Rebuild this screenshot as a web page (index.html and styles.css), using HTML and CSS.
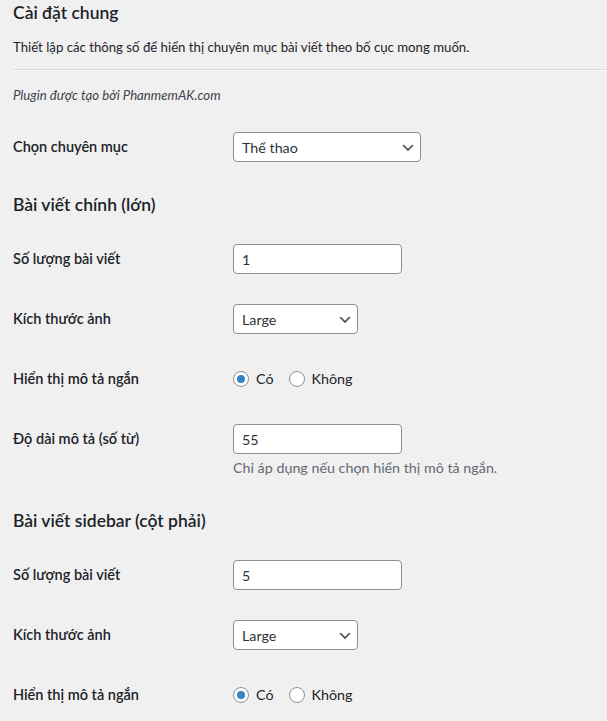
FILE: index.html
```html
<!DOCTYPE html>
<html lang="vi">
<head>
    <meta charset="UTF-8">
    <meta name="viewport" content="width=device-width, initial-scale=1.0">
    <title>Cài đặt chung</title>
    <link rel="stylesheet" href="styles.css">
</head>
<body>
    <div class="wrap">
        <h2 class="title first">Cài đặt chung</h2>
        <p>Thiết lập các thông số để hiển thị chuyên mục bài viết theo bố cục mong muốn.</p>
        <hr>
        <p class="credit"><em>Plugin được tạo bởi PhanmemAK.com</em></p>

        <form>
            <table class="form-table">
                <tr>
                    <th><label for="category">Chọn chuyên mục</label></th>
                    <td>
                        <span class="select-wrap">
                            <select id="category" class="sel-cat">
                                <option>Thể thao</option>
                            </select>
                            <svg class="chevron" viewBox="0 0 20 20"><path d="M5 6l5 5 5-5 2 1-7 7-7-7 2-1z"/></svg>
                        </span>
                    </td>
                </tr>
            </table>

            <!-- Bài viết chính -->
            <h2 class="title">Bài viết chính (lớn)</h2>
            <table class="form-table">
                <tr>
                    <th><label for="mainCount">Số lượng bài viết</label></th>
                    <td><input type="number" id="mainCount" class="num" value="1"></td>
                </tr>
                <tr>
                    <th><label for="mainSize">Kích thước ảnh</label></th>
                    <td>
                        <span class="select-wrap">
                            <select id="mainSize" class="sel-size">
                                <option>Large</option>
                            </select>
                            <svg class="chevron" viewBox="0 0 20 20"><path d="M5 6l5 5 5-5 2 1-7 7-7-7 2-1z"/></svg>
                        </span>
                    </td>
                </tr>
                <tr>
                    <th>Hiển thị mô tả ngắn</th>
                    <td>
                        <div class="radios">
                            <label><input type="radio" name="mainExcerpt" checked> Có</label>
                            <label><input type="radio" name="mainExcerpt"> Không</label>
                        </div>
                    </td>
                </tr>
                <tr>
                    <th><label for="mainLength">Độ dài mô tả (số từ)</label></th>
                    <td>
                        <input type="number" id="mainLength" class="num" value="55">
                        <p class="description">Chỉ áp dụng nếu chọn hiển thị mô tả ngắn.</p>
                    </td>
                </tr>
            </table>

            <!-- Bài viết sidebar -->
            <h2 class="title">Bài viết sidebar (cột phải)</h2>
            <table class="form-table">
                <tr>
                    <th><label for="sideCount">Số lượng bài viết</label></th>
                    <td><input type="number" id="sideCount" class="num" value="5"></td>
                </tr>
                <tr>
                    <th><label for="sideSize">Kích thước ảnh</label></th>
                    <td>
                        <span class="select-wrap">
                            <select id="sideSize" class="sel-size">
                                <option>Large</option>
                            </select>
                            <svg class="chevron" viewBox="0 0 20 20"><path d="M5 6l5 5 5-5 2 1-7 7-7-7 2-1z"/></svg>
                        </span>
                    </td>
                </tr>
                <tr>
                    <th>Hiển thị mô tả ngắn</th>
                    <td>
                        <div class="radios">
                            <label><input type="radio" name="sideExcerpt" checked> Có</label>
                            <label><input type="radio" name="sideExcerpt"> Không</label>
                        </div>
                    </td>
                </tr>
            </table>
        </form>
    </div>
</body>
</html>
```

FILE: styles.css
```css
body {
    margin: 0;
    padding: 0;
    background-color: #f0f0f1;
    color: #1d2327;
    font-family: Lato, "Noto Sans", sans-serif;
    font-size: 13.2px;
    line-height: 18px;
}

.wrap {
    padding: 4px 0 0 13px;
}

h2.title {
    font-size: 17.5px;
    font-weight: 600;
    line-height: 18px;
    margin: 19px 0 15px;
}

h2.first {
    margin-top: 0;
}

p {
    margin: 16px 0 13px;
}

hr {
    border: 0;
    border-top: 1px solid #dcdcde;
    border-bottom: 1px solid #f6f7f7;
    margin: 0;
}

p.credit {
    margin: 15px 0 13px;
    color: #3c434a;
}

.form-table {
    border-collapse: collapse;
    margin: 0;
}

.form-table th {
    width: 200px;
    padding: 20px 10px 20px 0;
    vertical-align: top;
    text-align: left;
    font-size: 14.5px;
    font-weight: 600;
    line-height: 20px;
}

.form-table td {
    padding: 15px 10px;
    vertical-align: top;
    font-size: 14.3px;
}

input.num, select {
    box-sizing: border-box;
    height: 30px;
    border: 1px solid #8c8f94;
    border-radius: 4px;
    background-color: #fff;
    color: #2c3338;
    font-family: inherit;
    font-size: 14.3px;
    margin: 0;
    display: block;
}

input.num {
    width: 169px;
    padding: 0 8px;
    -moz-appearance: textfield;
}

input.num::-webkit-inner-spin-button,
input.num::-webkit-outer-spin-button {
    -webkit-appearance: none;
    margin: 0;
}

select {
    -webkit-appearance: none;
    appearance: none;
    padding: 0 24px 0 8px;
}

.sel-cat {
    width: 188px;
}

.sel-size {
    width: 125px;
}

.select-wrap {
    position: relative;
    display: block;
    width: max-content;
}

.chevron {
    position: absolute;
    right: 5px;
    top: 8px;
    width: 16px;
    height: 16px;
    fill: #555;
    pointer-events: none;
}

.radios {
    display: flex;
    align-items: center;
    height: 30px;
}

.radios label {
    display: flex;
    align-items: center;
    margin-right: 15px;
}

input[type="radio"] {
    -webkit-appearance: none;
    appearance: none;
    box-sizing: border-box;
    width: 16px;
    height: 16px;
    margin: 0 7px 0 0;
    border: 1px solid #8c8f94;
    border-radius: 50%;
    background-color: #fff;
    position: relative;
}

input[type="radio"]:checked::before {
    content: "";
    position: absolute;
    left: 3px;
    top: 3px;
    width: 8px;
    height: 8px;
    border-radius: 50%;
    background-color: #3582c4;
}

p.description {
    margin: 4px 0 0;
    color: #646970;
    font-size: 14.3px;
    line-height: 20px;
}
```
